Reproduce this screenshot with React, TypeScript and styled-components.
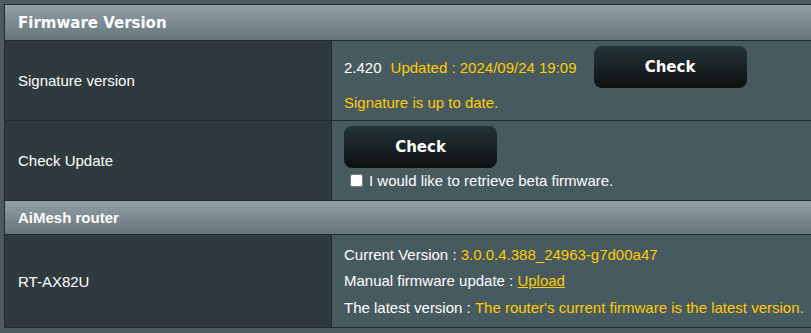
import styled, { createGlobalStyle } from "styled-components";

const GlobalStyle = createGlobalStyle`
    html, body {
        margin: 0;
        padding: 0;
        background-color: #4d5a5f;
        overflow: hidden;
    }
    body {
        font-family: "Liberation Sans", Arial, sans-serif;
        font-size: 15px;
        color: #ffffff;
    }
`;

const Page = styled.div`
    padding: 4px;
    width: 840px;
`;

const FormTable = styled.div`
    border: 1px solid #222a2d;
    border-right: none;
`;

const SectionHeader = styled.div<{ $verdana?: boolean }>`
    display: flex;
    align-items: center;
    height: ${(props) => (props.$verdana ? "35px" : "33px")};
    padding-left: 13px;
    background: linear-gradient(#92a0a5 0%, #66757c 100%);
    border-bottom: 1px solid #222a2d;
    font-family: ${(props) =>
        props.$verdana ? `"DejaVu Sans", Verdana, sans-serif` : `"Liberation Sans", Arial, sans-serif`};
    font-weight: bold;
    font-size: 15px;
    color: #ffffff;
`;

const Row = styled.div<{ $height: number }>`
    display: grid;
    grid-template-columns: 327px 1fr;
    height: ${(props) => props.$height}px;
    border-bottom: 1px solid #222a2d;
`;

const LabelCell = styled.div`
    display: flex;
    align-items: center;
    padding-left: 13px;
    background-color: #2f3a3e;
    border-right: 1px solid #222a2d;
`;

const ValueCell = styled.div<{ $pad: string }>`
    display: flex;
    flex-direction: column;
    padding: ${(props) => props.$pad};
    background-color: #475a5f;
`;

const InlineLine = styled.div`
    display: flex;
    align-items: center;
    height: 42px;
`;

const TextLine = styled.div<{ $height?: number; $top?: number }>`
    display: flex;
    align-items: center;
    height: ${(props) => props.$height ?? 20}px;
    margin-top: ${(props) => props.$top ?? 0}px;
    white-space: nowrap;
`;

const Highlight = styled.span<{ $gap?: number }>`
    color: #ffcc00;
    margin-left: ${(props) => props.$gap ?? 0}px;
`;

const LinkText = styled.a`
    color: #ffcc00;
    text-decoration: underline;
    cursor: pointer;
`;

const GenButton = styled.button<{ $gap?: number }>`
    width: 153px;
    height: 42px;
    margin-left: ${(props) => props.$gap ?? 0}px;
    border: none;
    border-radius: 8px;
    background: linear-gradient(#233438 0%, #0f1011 100%);
    color: #ffffff;
    font-family: "DejaVu Sans", Verdana, sans-serif;
    font-weight: bold;
    font-size: 15px;
    cursor: pointer;
`;

const CheckLabel = styled.label`
    display: flex;
    align-items: center;
    height: 20px;
    margin-top: 2px;
`;

const CheckBox = styled.input`
    width: 13px;
    height: 13px;
    margin: 0 6px 0 6px;
`;

function App() {
    return (
        <Page>
            <GlobalStyle />
            <FormTable>
                <SectionHeader $verdana>Firmware Version</SectionHeader>
                <Row $height={79}>
                    <LabelCell>Signature version</LabelCell>
                    <ValueCell $pad="5px 12px 8px">
                        <InlineLine>
                            <span>2.420</span>
                            <Highlight $gap={9}>Updated : 2024/09/24 19:09</Highlight>
                            <GenButton $gap={17}>Check</GenButton>
                        </InlineLine>
                        <TextLine $top={4}>
                            <Highlight>Signature is up to date.</Highlight>
                        </TextLine>
                    </ValueCell>
                </Row>
                <Row $height={79}>
                    <LabelCell>Check Update</LabelCell>
                    <ValueCell $pad="5px 12px 8px">
                        <GenButton>Check</GenButton>
                        <CheckLabel>
                            <CheckBox type="checkbox" />
                            I would like to retrieve beta firmware.
                        </CheckLabel>
                    </ValueCell>
                </Row>
                <SectionHeader>AiMesh router</SectionHeader>
                <Row $height={91}>
                    <LabelCell>RT-AX82U</LabelCell>
                    <ValueCell $pad="6px 12px 7px">
                        <TextLine $height={26}>
                            Current Version :&nbsp;<Highlight>3.0.0.4.388_24963-g7d00a47</Highlight>
                        </TextLine>
                        <TextLine $height={27}>
                            Manual firmware update :&nbsp;<LinkText>Upload</LinkText>
                        </TextLine>
                        <TextLine $height={26}>
                            The latest version :&nbsp;
                            <Highlight>The router's current firmware is the latest version.</Highlight>
                        </TextLine>
                    </ValueCell>
                </Row>
            </FormTable>
        </Page>
    );
}

export default App;
